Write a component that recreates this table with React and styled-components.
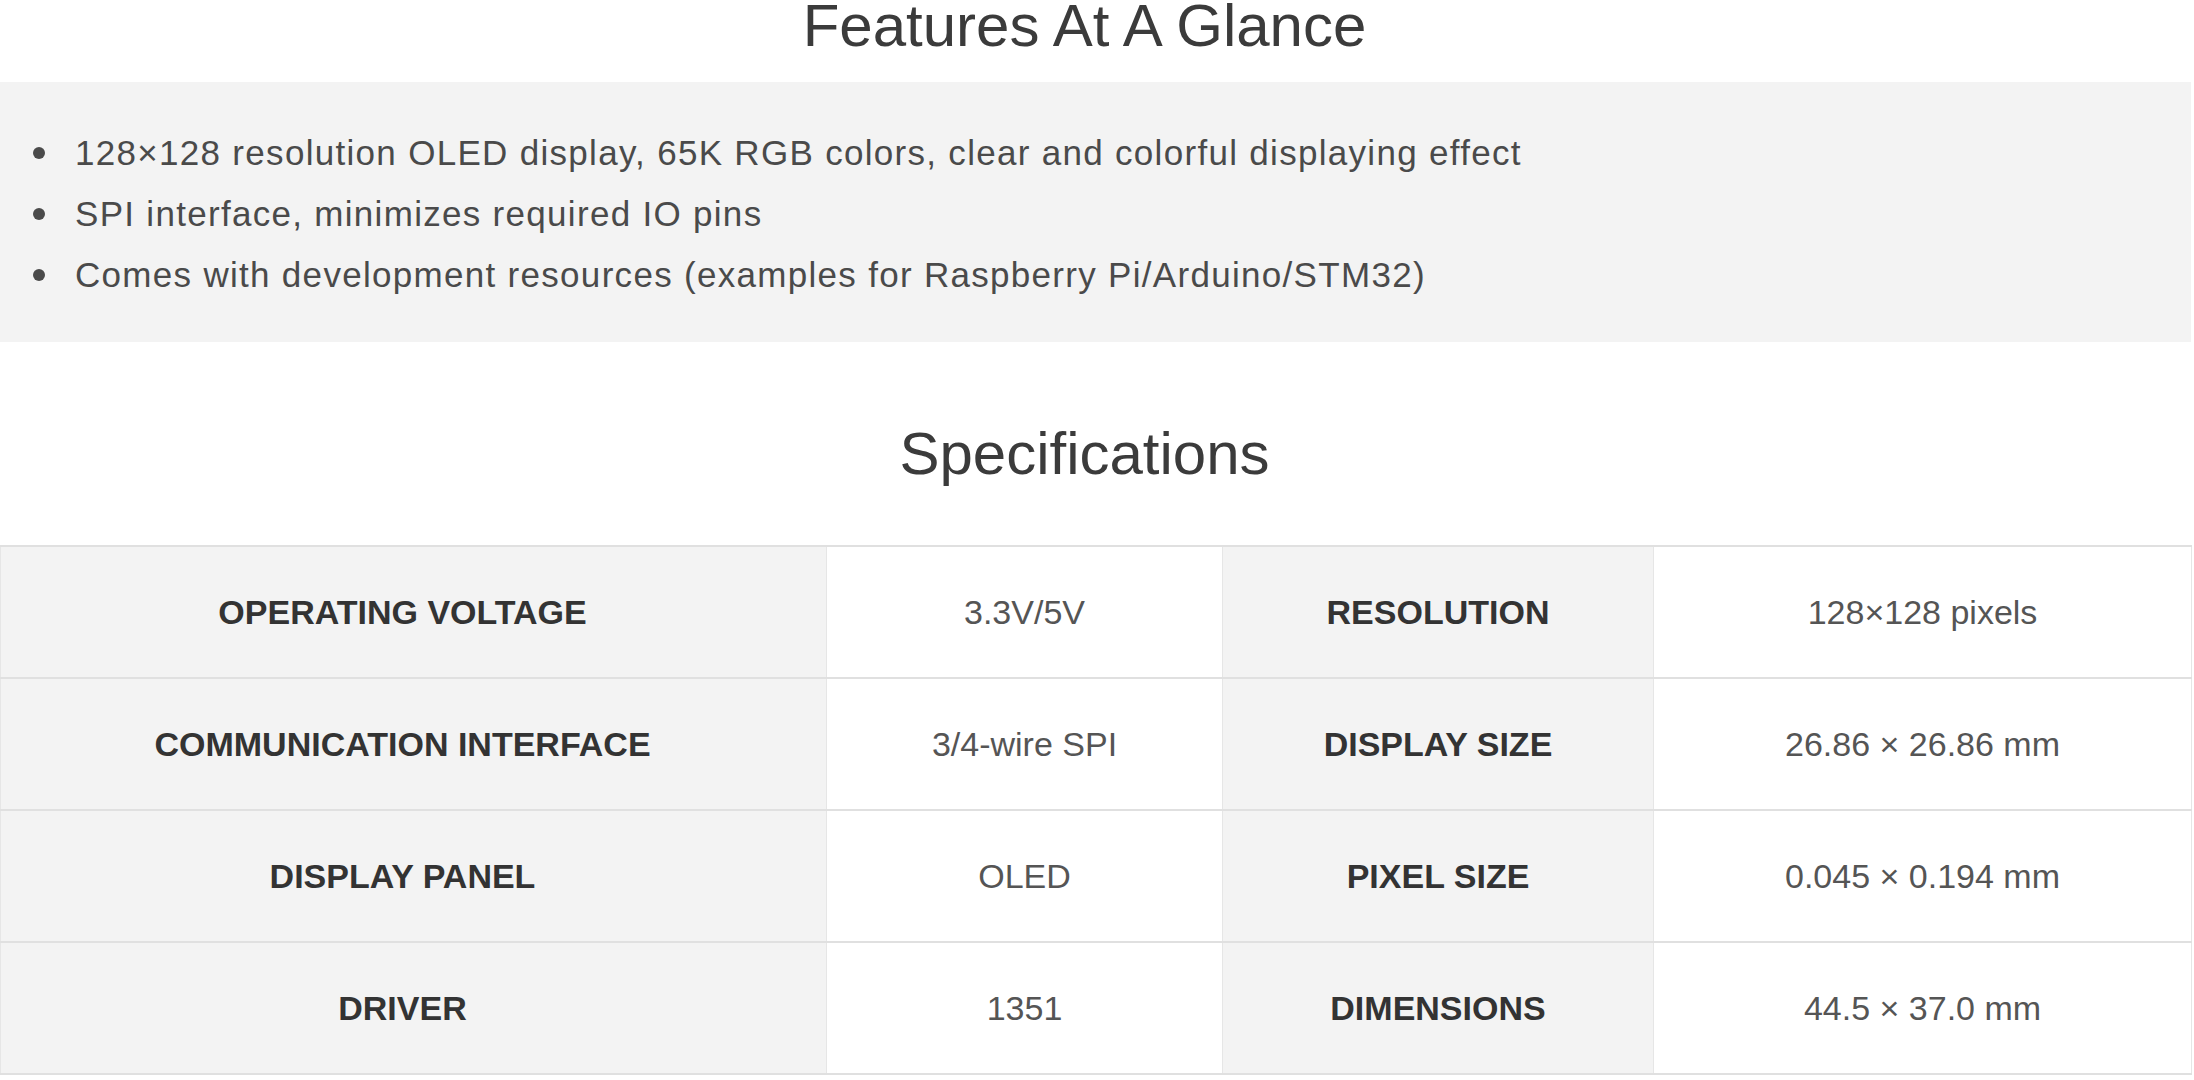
import React from 'react';
import styled, { createGlobalStyle } from 'styled-components';

const GlobalStyle = createGlobalStyle`
  html, body {
    margin: 0;
    padding: 0;
    background: #fff;
  }
  body {
    font-family: "Liberation Sans", Arial, Helvetica, sans-serif;
  }
`;

const Page = styled.div`
  width: 2191px;
`;

const SectionTitle = styled.h2`
  margin: ${(p) => p.$top || 0}px 0 0;
  padding-right: 22px;
  font-size: 60px;
  font-weight: 400;
  line-height: 52px;
  text-align: center;
  color: #3b3b3b;
`;

const FeatureBand = styled.ul`
  margin: 30px 0 0;
  padding: 40px 0 37px;
  list-style: none;
  background: #f3f3f3;
`;

const FeatureItem = styled.li`
  display: flex;
  align-items: center;
  font-size: 35px;
  line-height: 61px;
  letter-spacing: 1.3px;
  color: #4a4a4a;

  &::before {
    content: "";
    flex: none;
    width: 12px;
    height: 12px;
    margin: 0 30px 0 33px;
    border-radius: 50%;
    background: #4a4a4a;
  }
`;

const SpecTable = styled.table`
  width: 100%;
  margin-top: 65px;
  border-collapse: collapse;
  table-layout: fixed;
`;

const Col = styled.col`
  width: ${(p) => p.$w}px;
`;

const Row = styled.tr`
  height: 132px;
`;

const LabelCell = styled.th`
  padding: 0 ${(p) => (p.$first ? 22 : 0)}px 0 0;
  border-top: 2px solid #e0e0e0;
  border-bottom: 2px solid #e0e0e0;
  border-left: 1px solid #e6e6e6;
  border-right: 1px solid #e6e6e6;
  background: #f3f3f3;
  font-size: 34px;
  font-weight: 700;
  color: #333;
  text-align: center;
`;

const ValueCell = styled.td`
  padding: 0;
  border-top: 2px solid #e0e0e0;
  border-bottom: 2px solid #e0e0e0;
  border-left: 1px solid #e6e6e6;
  border-right: 1px solid #e6e6e6;
  background: #fff;
  font-size: 34px;
  color: #555;
  text-align: center;
`;

const features = [
  '128×128 resolution OLED display, 65K RGB colors, clear and colorful displaying effect',
  'SPI interface, minimizes required IO pins',
  'Comes with development resources (examples for Raspberry Pi/Arduino/STM32)',
];

const specs = [
  ['OPERATING VOLTAGE', '3.3V/5V', 'RESOLUTION', '128×128 pixels'],
  ['COMMUNICATION INTERFACE', '3/4-wire SPI', 'DISPLAY SIZE', '26.86 × 26.86 mm'],
  ['DISPLAY PANEL', 'OLED', 'PIXEL SIZE', '0.045 × 0.194 mm'],
  ['DRIVER', '1351', 'DIMENSIONS', '44.5 × 37.0 mm'],
];

export default function App() {
  return (
    <>
      <GlobalStyle />
      <Page>
        <SectionTitle>Features At A Glance</SectionTitle>
        <FeatureBand>
          {features.map((f) => (
            <FeatureItem key={f}>{f}</FeatureItem>
          ))}
        </FeatureBand>

        <SectionTitle $top={86}>Specifications</SectionTitle>
        <SpecTable>
          <colgroup>
            <Col $w={826} />
            <Col $w={396} />
            <Col $w={431} />
            <Col $w={538} />
          </colgroup>
          <tbody>
            {specs.map(([l1, v1, l2, v2]) => (
              <Row key={l1}>
                <LabelCell $first>{l1}</LabelCell>
                <ValueCell>{v1}</ValueCell>
                <LabelCell>{l2}</LabelCell>
                <ValueCell>{v2}</ValueCell>
              </Row>
            ))}
          </tbody>
        </SpecTable>
      </Page>
    </>
  );
}
